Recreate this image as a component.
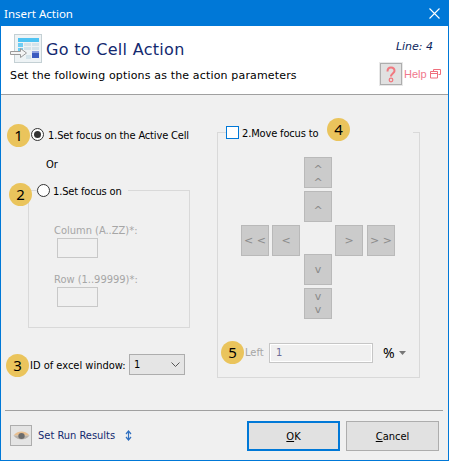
<div class="window">
  <div class="titlebar">
    <span>Insert Action</span>
    <svg class="close" width="11" height="11" viewBox="0 0 11 11"><path d="M0.5 0.5L10.5 10.5M10.5 0.5L0.5 10.5" stroke="#fff" stroke-width="1.1" fill="none"/></svg>
  </div>

  <header class="head">
    <div class="head-top">
      <svg class="logo" width="34" height="30" viewBox="0 0 34 30">
        <rect x="5.5" y="0.5" width="27" height="28" fill="#eef3f5" stroke="#c4d0d4"/>
        <rect x="9" y="4" width="21" height="4" fill="#4fc3f2"/>
        <path d="M9 9h5v4H9zM9 14h5v3H9z" fill="#6fcdf4"/>
        <path d="M15 9h7v3h-7zM23 9h7v3h-7zM15 13h7v3h-7zM23 13h7v3h-7zM17 21h5v4h-5z" fill="#d4e3ea"/>
        <rect x="23" y="17" width="7" height="7" fill="#3c5cc0"/>
        <rect x="23" y="17" width="7" height="2" fill="#8ea2e0"/>
        <path d="M1.5 17.5h10v-3l6 4.5-6 4.5v-3h-10z" fill="#f4f4f4" stroke="#9a9a9a"/>
      </svg>
      <h1>Go to Cell Action</h1>
      <em class="line">Line: 4</em>
    </div>
    <div class="head-bottom">
      <p>Set the following options as the action parameters</p>
      <div class="help">
        <span class="help-btn">
          <svg width="12" height="17" viewBox="0 0 12 17"><path d="M2.5 5.5C2.5 3 4 1.5 6 1.5S9.5 3 9.5 5C9.5 7 6 7.5 6 10.5" fill="none" stroke="#f1787f" stroke-width="2"/><circle cx="6" cy="14" r="1.8" fill="none" stroke="#f1787f" stroke-width="1.3"/></svg>
        </span>
        <span class="help-text">Help</span>
        <svg class="popout" width="11" height="10" viewBox="0 0 11 10"><path d="M3.5 2.5V0.5H10.5V5.5H8.5M0.5 2.5H7.5V9H0.5ZM0.5 4.5H7.5" fill="none" stroke="#ef6f7c"/></svg>
      </div>
    </div>
  </header>

  <main class="body">
    <section class="left">
      <div class="row r1">
        <span class="badge b1">1</span>
        <span class="radio on"></span>
        <label class="tight">1.Set focus on the Active Cell</label>
      </div>
      <div class="or">Or</div>
      <div class="anchor">
        <span class="badge b2">2</span>
        <fieldset class="group-left">
          <legend><span class="radio"></span><label class="tight">1.Set focus on</label></legend>
          <div class="field first"><span class="dim">Column (A..ZZ)*:</span><div class="small-input"></div></div>
          <div class="field"><span class="dim">Row (1..99999)*:</span><div class="small-input"></div></div>
        </fieldset>
      </div>
      <div class="row r3">
        <span class="badge b3">3</span>
        <label>ID of excel window:</label>
        <div class="select"><span>1</span>
          <svg width="9" height="5" viewBox="0 0 9 5"><path d="M0.5 0.5L4.5 4.5L8.5 0.5" fill="none" stroke="#555"/></svg>
        </div>
      </div>
    </section>

    <section class="right">
      <span class="badge b4">4</span>
      <fieldset class="group-right">
        <legend><span class="check"></span><label class="tight">2.Move focus to</label></legend>
        <div class="pad">
          <button class="arrow up stack">^<br />^</button>
          <button class="arrow up">^</button>
          <div class="pad-row">
            <button class="arrow">&lt; &lt;</button>
            <button class="arrow">&lt;</button>
            <span class="pad-gap"></span>
            <button class="arrow">&gt;</button>
            <button class="arrow last">&gt; &gt;</button>
          </div>
          <button class="arrow">v</button>
          <button class="arrow stack down">v<br />v</button>
        </div>
        <div class="left-row">
          <span class="badge b5">5</span>
          <span class="dim left-label">Left</span>
          <div class="left-input">1</div>
          <span class="pct">%</span>
          <svg width="7" height="4" viewBox="0 0 7 4"><path d="M0 0h7L3.5 4z" fill="#777"/></svg>
        </div>
      </fieldset>
    </section>
  </main>

  <footer class="foot">
    <div class="run">
      <span class="eye">
        <svg width="17" height="9" viewBox="0 0 17 9"><path d="M0.5 4.5C3 1.2 6 0.5 8.5 0.5S14 1.2 16.5 4.5H0.5Z" fill="#e8bf90"/><path d="M0.5 4.5H16.5C14 7.8 11 8.5 8.5 8.5S3 7.8 0.5 4.5Z" fill="#b9b3ac"/><ellipse cx="8.5" cy="5" rx="3.2" ry="3" fill="#6c6c6c"/></svg>
      </span>
      <span class="run-text">Set Run Results</span>
      <svg class="updown" width="7" height="11" viewBox="0 0 7 11"><path d="M1 4L3.5 1L6 4M1 7L3.5 10L6 7" fill="none" stroke="#2f6fc0" stroke-width="1.2"/><path d="M3.5 2V9" stroke="#2f6fc0" stroke-width="1.2"/></svg>
    </div>
    <div class="actions">
      <button class="btn primary"><u>O</u>K</button>
      <button class="btn"><u>C</u>ancel</button>
    </div>
  </footer>
</div>

<style>
  :global(body) { margin: 0; }
  .window {
    width: 449px; height: 461px; box-sizing: border-box; overflow: hidden;
    display: flex; flex-direction: column;
    background: #f0f0f0;
    border: 1px solid #0078d7; border-top: 0;
    font: 11px "DejaVu Sans Condensed", "DejaVu Sans", sans-serif;
    color: #000;
  }
  label { white-space: nowrap; }
  .tight { letter-spacing: -.15px; padding-top: 3px; }
  .titlebar {
    height: 26px; background: #0078d7; color: #fff; flex: none;
    font: 11.5px "Noto Sans", sans-serif;
    display: flex; align-items: center; justify-content: space-between;
    padding: 0 5px 0 4px; margin: 0 -1px;
  }
  .close { margin-right: 4px; }
  .head { height: 69px; flex: none; background: #fff; border-bottom: 1px solid #a0a0a0; box-sizing: border-box; padding: 9px 7px 0 8px; font-family: "DejaVu Sans", sans-serif; }
  .head-top { display: flex; align-items: center; height: 28px; }
  .logo { flex: none; }
  h1 { margin: 0 0 0 3px; font-size: 16px; font-weight: 400; color: #13296f; letter-spacing: .3px; flex: 1; }
  .line { font-size: 11px; color: #0b1f5c; margin: -5px 8px 0 0; }
  .head-bottom { display: flex; justify-content: space-between; align-items: flex-start; }
  .head-bottom p { margin: 6px 0 0 1px; letter-spacing: .16px; }
  .help { display: flex; align-items: center; color: #f0788c; font: 11px "Liberation Sans", sans-serif; }
  .help-btn { width: 22px; height: 22px; box-sizing: border-box; background: #e1e1e1; border: 1px solid #adadad; outline: 1px solid #e8e8e8; display: flex; align-items: center; justify-content: center; margin-right: 2px; }
  .help-text { width: 20px; white-space: nowrap; }
  .popout { margin: 0 0 0 6px; }

  .body { flex: 1; display: flex; min-height: 0; }
  .left { width: 215px; flex: none; padding-left: 5px; box-sizing: border-box; }
  .right { flex: 1; position: relative; }
  .row { display: flex; align-items: center; position: relative; }
  .badge {
    position: absolute; width: 23px; height: 23px; border-radius: 50%;
    background: #eac45c; color: #000; font: 15px/23px "Noto Sans", sans-serif; text-align: center;
  }
  .r1 { margin-top: 29px; padding-left: 25px; height: 20px; }
  .r1 label { margin-left: 4px; }
  .b1 { left: 1px; top: 0; }
  .radio { width: 11px; height: 11px; border: 1px solid #333; border-radius: 50%; background: #fff; display: inline-block; position: relative; flex: none; }
  .radio.on::after { content: ""; position: absolute; inset: 2px; border-radius: 50%; background: #333; }
  .or { margin: 12px 0 0 40px; height: 17px; line-height: 17px; }
  .anchor { position: relative; }
  .b2 { left: 3px; top: 1px; z-index: 1; }
  fieldset { margin: 0; box-sizing: border-box; border: 1px solid #d9d9d9; min-inline-size: 0; }
  .group-left { width: 162px; height: 146px; margin: 9px 0 0 22px; padding: 0; }
  legend { display: flex; align-items: center; padding: 0 4px 0 0; height: 16px; margin-left: 8px; box-sizing: border-box; width: 91px; }
  legend .radio { margin-right: 3px; }
  .dim { color: #a6a6a6; display: block; white-space: nowrap; }
  .field { margin: 15px 0 0 25px; }
  .field.first { margin-top: 26px; }
  .small-input { width: 41px; height: 20px; box-sizing: border-box; border: 1px solid #c8c8c8; background: #f0f0f0; margin: 1px 0 0 3px; }
  .r3 { margin-top: 26px; height: 21px; padding-left: 24px; }
  .r3 label { width: 99px; padding-top: 2px; }
  .b3 { left: 0; top: 0; }
  .select { width: 56px; height: 21px; box-sizing: border-box; border: 1px solid #adadad; background: #e5e5e5; display: flex; align-items: center; justify-content: space-between; padding: 0 4px 0 4px; }

  .b4 { left: 111px; top: 23px; z-index: 1; }
  .group-right { width: 203px; height: 254px; margin: 29px 0 0 1px; padding: 0; }
  .group-right legend { margin-left: 8px; width: 187px; }
  .check { width: 13px; height: 13px; box-sizing: border-box; border: 1.5px solid #0078d7; background: #fff; margin-right: 3px; flex: none; }
  .pad { display: flex; flex-direction: column; align-items: center; gap: 3px; margin-top: 17px; padding-right: 1px; }
  .pad-row { display: flex; align-items: flex-start; gap: 3px; height: 26px; width: 154px; }
  .pad-gap { width: 29px; }
  .last { margin-left: 1px; }
  .arrow {
    width: 28px; height: 31px; flex: none; box-sizing: border-box; padding: 0;
    background: #cbcbcb; border: 1px solid #b9b9b9; color: #8a8a8a;
    font: 11px/13px "DejaVu Sans", sans-serif; text-align: center;
  }
  .up { padding-top: 8px; }
  .up.stack { padding-top: 5px; }
  .down { padding-bottom: 2px; }
  .left-row { display: flex; align-items: center; position: relative; margin-top: 23px; padding-left: 27px; height: 21px; }
  .left-label { width: 24px; }
  .b5 { left: 3px; top: -1px; }
  .left-input { width: 104px; height: 20px; box-sizing: border-box; border: 1px solid #c6c6c6; outline: 1px solid #fff; outline-offset: -2px; padding-left: 6px; line-height: 18px; color: #6d6d9a; }
  .pct { font: 14px "Noto Sans", sans-serif; margin: 0 4px 0 10px; }

  .foot { flex: none; margin: 0 5px 0 4px; height: 50px; border-top: 1px solid #a0a0a0; display: flex; align-items: flex-start; justify-content: space-between; padding-top: 10px; box-sizing: border-box; }
  .run { display: flex; align-items: center; margin: 4px 0 0 5px; }
  .eye { width: 22px; height: 21px; box-sizing: border-box; border: 1px solid #adadad; background: #e4e4e4; display: flex; align-items: center; justify-content: center; }
  .run-text { margin-left: 6px; color: #13296f; }
  .updown { margin-left: 10px; }
  .actions { display: flex; gap: 6px; margin-right: 4px; }
  .btn { width: 93px; height: 30px; box-sizing: border-box; background: #e1e1e1; border: 1px solid #adadad; font: 11px "DejaVu Sans Condensed", "DejaVu Sans", sans-serif; color: #000; padding: 0; }
  .btn.primary { border: 2px solid #0078d7; }
</style>
